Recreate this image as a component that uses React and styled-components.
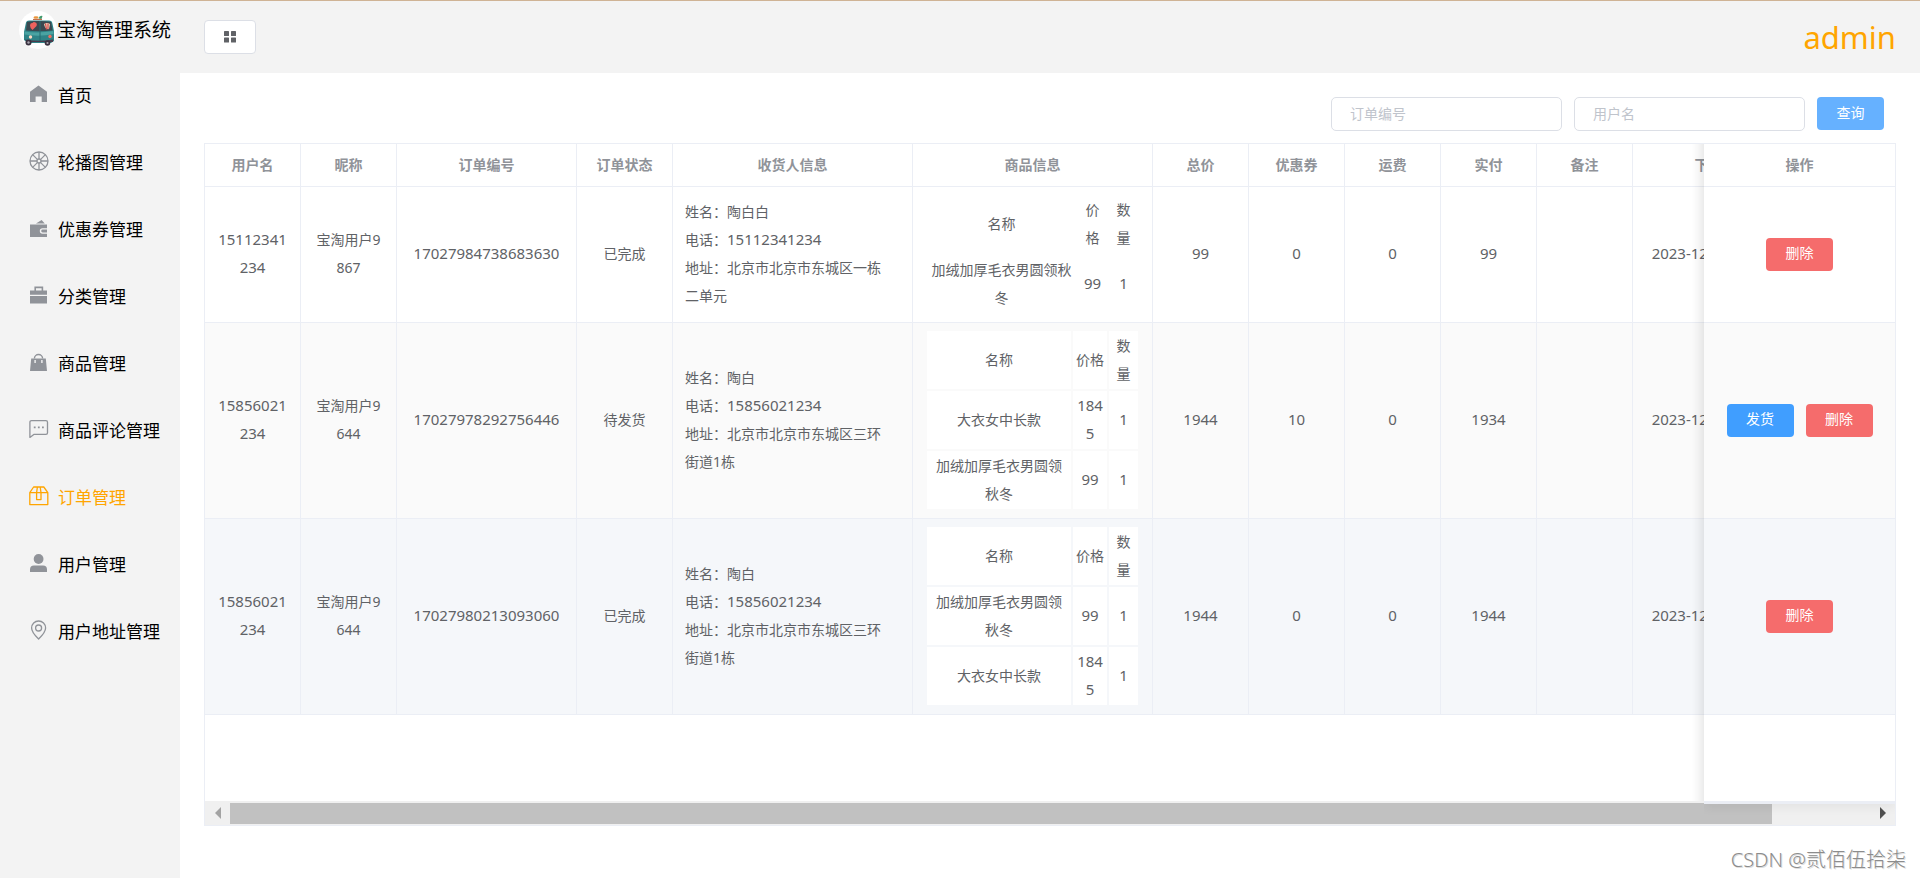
import React, { useRef } from 'react';
import styled, { createGlobalStyle, css } from 'styled-components';

const colors = {
  panel: '#f3f3f3',
  border: '#ebeef5',
  control: '#dcdfe6',
  text: '#606266',
  muted: '#909399',
  placeholder: '#c0c4cc',
  active: '#ffa500',
  primary: '#409eff',
  primaryLight: '#66b1ff',
  danger: '#f56c6c',
};

const GlobalStyle = createGlobalStyle`
  *, *::before, *::after {
    box-sizing: border-box;
  }

  body {
    margin: 0;
    background: #fff;
    font-family: 'Noto Sans', 'Noto Sans CJK SC', sans-serif;
    font-size: 14px;
    color: ${colors.text};
  }

  button, input {
    font-family: inherit;
    font-size: 14px;
  }
`;

const Page = styled.div`
  display: flex;
  min-height: 100vh;
  border-top: 1px solid #cfb395;
`;

const Sidebar = styled.aside`
  flex: 0 0 180px;
  background: ${colors.panel};
`;

const Brand = styled.div`
  display: flex;
  align-items: center;
  height: 60px;
  padding: 0 0 2px 19px;
  font-size: 19px;
  line-height: 24px;
  white-space: nowrap;
  color: #000;
`;

const MenuLink = styled.a`
  display: flex;
  align-items: center;
  gap: 9px;
  height: 67px;
  padding-left: 29px;
  font-size: 17px;
  text-decoration: none;
  white-space: nowrap;
  color: ${({ $active }) => ($active ? colors.active : '#000')};

  svg {
    flex: none;
    margin-bottom: 2px;
    color: ${({ $active }) => ($active ? colors.active : colors.muted)};
  }
`;

const Body = styled.div`
  flex: 1;
  min-width: 0;
`;

const Header = styled.header`
  display: flex;
  align-items: center;
  justify-content: space-between;
  height: 72px;
  padding: 0 24px;
  background: ${colors.panel};
`;

const ToggleButton = styled.button`
  display: flex;
  align-items: center;
  justify-content: center;
  width: 52px;
  height: 34px;
  padding: 0;
  border: 1px solid ${colors.control};
  border-radius: 4px;
  background: #fff;
  color: ${colors.text};
`;

const UserName = styled.span`
  font-size: 31px;
  color: ${colors.active};
`;

const Main = styled.main`
  padding: 24px;
`;

const SearchForm = styled.form`
  display: flex;
  justify-content: flex-end;
  gap: 12px;
  padding-right: 12px;
  margin-bottom: 12px;
`;

const SearchInput = styled.input`
  width: 231px;
  height: 34px;
  padding: 0 18px 2px;
  border: 1px solid ${colors.control};
  border-radius: 5px;
  background: #fff;
  color: ${colors.text};

  &::placeholder {
    color: ${colors.placeholder};
  }
`;

const Button = styled.button`
  min-width: 67px;
  height: 33px;
  padding: 0 18px 2px;
  border: 0;
  border-radius: 4px;
  line-height: 20px;
  color: #fff;
  background: ${({ $color }) => $color};
`;

const TableFrame = styled.div`
  border: 1px solid ${colors.border};
`;

const Scroller = styled.div`
  overflow-x: auto;
  scrollbar-width: none;
`;

const OrderTable = styled.table`
  width: 100%;
  min-width: 1799px;
  table-layout: fixed;
  border-spacing: 0;
  text-align: center;
  word-break: break-all;
`;

const cellBorder = css`
  border-right: 1px solid ${colors.border};
  border-bottom: 1px solid ${colors.border};
`;

// the operation column stays in view while the rest scrolls under it
const fixedCell = css`
  position: sticky;
  right: 0;
  border-right: 0;

  &::before {
    content: '';
    position: absolute;
    top: 0;
    bottom: -1px;
    right: 100%;
    width: 12px;
    background: linear-gradient(to left, rgba(0, 0, 0, 0.08), rgba(0, 0, 0, 0.03) 50%, transparent);
  }
`;

const HeadCell = styled.th`
  height: 43px;
  padding: 0 12px 3px;
  font-weight: 700;
  color: ${colors.muted};
  background: #fff;
  ${cellBorder}
  ${({ $fixed }) => $fixed && fixedCell}
`;

const Row = styled.tr`
  background: ${({ $background }) => $background};
`;

const Cell = styled.td`
  height: 136px;
  padding: 6px ${({ $left }) => ($left ? 20 : 12)}px 7px 12px;
  line-height: 28px;
  text-align: ${({ $left }) => ($left ? 'left' : 'center')};
  background: inherit;
  ${cellBorder}
  ${({ $fixed }) => $fixed && fixedCell}
`;

const BlankCell = styled.td`
  height: 86px;
  padding: 0;
  background: #fff;
  ${({ $fixed }) => $fixed && fixedCell}
`;

const Num = styled.span`
  font-size: 15px;
  line-height: 20px;
`;

const Actions = styled.div`
  display: flex;
  justify-content: center;
  gap: 12px;
`;

const GoodsTable = styled.table`
  width: 100%;
  table-layout: fixed;
  border-spacing: 2px;
  line-height: 28px;

  th,
  td {
    padding: 1px 3px;
    font-weight: 400;
    background: #fff;
  }
`;

const ScrollBar = styled.div`
  position: relative;
  display: flex;
  align-items: center;
  height: 24px;
  background: #f0f0f0;

  /* foot of the fixed column */
  &::after {
    content: '';
    position: absolute;
    top: 0;
    right: 0;
    width: 191px;
    height: 3px;
    background: ${colors.border};
    box-shadow: 0 0 12px rgba(0, 0, 0, 0.2);
    clip-path: inset(0 0 -12px 0);
  }
`;

const ScrollTrack = styled.div`
  flex: 1;
  height: 21px;
`;

const ScrollThumb = styled.div`
  width: 94%;
  height: 100%;
  background: #c1c1c1;
`;

const ArrowButton = styled.button`
  display: flex;
  align-items: center;
  justify-content: center;
  width: 25px;
  height: 24px;
  padding: 0;
  border: 0;
  background: none;
  color: ${({ $dim }) => ($dim ? '#a3a3a3' : '#505050')};
`;

const Watermark = styled.div`
  position: absolute;
  right: 14px;
  bottom: 4px;
  font-size: 20px;
  font-weight: 300;
  line-height: 28px;
  color: #8c8c8c;
  text-shadow: 1px 1px 0 #ddd;
`;

const Icon = ({ children }) => (
  <svg width="20" height="20" viewBox="0 0 20 20" fill="currentColor" aria-hidden="true">
    {children}
  </svg>
);

const LineIcon = ({ children }) => (
  <svg
    width="20"
    height="20"
    viewBox="0 0 20 20"
    fill="none"
    stroke="currentColor"
    strokeWidth="1.3"
    strokeLinejoin="round"
    aria-hidden="true"
  >
    {children}
  </svg>
);

const HomeIcon = () => (
  <Icon>
    <path d="M9.5 1.5 18 7.8V18h-5.3v-5.6H6.6V18H1V7.8z" />
  </Icon>
);

const WheelIcon = () => (
  <LineIcon>
    <circle cx="10" cy="10" r="9" />
    <circle cx="10" cy="10" r="2" />
    <path d="M10 1v7M10 12v7M1 10h7M12 10h7M3.6 3.6l5 5M11.4 11.4l5 5M16.4 3.6l-5 5M8.6 11.4l-5 5" />
  </LineIcon>
);

const WalletIcon = () => (
  <Icon>
    <path d="M7 5.6 12.6 2l3.2 3.6zM1 6.6h17v3.6h-4.4a2.8 2.8 0 0 0 0 5.6H18V19H1z" />
    <path d="M13.6 11.6H18v2.8h-4.4a1.4 1.4 0 0 1 0-2.8z" />
  </Icon>
);

const BriefcaseIcon = () => (
  <Icon>
    <path d="M5.4 1.6h8.8v4H18v4.2H1V5.6h4.4zM7 3.2v2.4h5.6V3.2zM1 11h17v7.6H1z" fillRule="evenodd" />
  </Icon>
);

const BagIcon = () => (
  <Icon>
    <path d="M5.4 6.6a4.1 4.1 0 0 1 8.2 0" fill="none" stroke="currentColor" strokeWidth="1.4" />
    <path d="M2.2 6.6h14.6L18 19H1zM5.4 8v3h1.4V8zM12.2 8v3h1.4V8z" fillRule="evenodd" />
  </Icon>
);

const CommentIcon = () => (
  <LineIcon>
    <path d="M.9 18.4V3.2a1.6 1.6 0 0 1 1.6-1.6h14.4a1.6 1.6 0 0 1 1.6 1.6v10.6a1.6 1.6 0 0 1-1.6 1.6H4.8z" />
    <path d="M4.8 8.4h1.8M8.9 8.4h1.8M13 8.4h1.8" strokeWidth="1.8" />
  </LineIcon>
);

const BoxIcon = () => (
  <LineIcon>
    <path d="M.8 6.6 4.6 1h10.2l4 5.6v12H.8zM.8 6.6h18M7.6 6.6 8.4 1M12 6.6 11.2 1M7.6 6.6v7H12v-7" />
  </LineIcon>
);

const UserIcon = () => (
  <Icon>
    <circle cx="9.6" cy="6" r="4.9" />
    <path d="M1 19v-2.4a4 4 0 0 1 4-4h9a4 4 0 0 1 4 4V19z" />
  </Icon>
);

const PinIcon = () => (
  <LineIcon>
    <path d="M9.6 19C5 14.6 2.6 11.2 2.6 8a7 7 0 0 1 14 0c0 3.2-2.4 6.6-7 11z" />
    <circle cx="9.6" cy="8" r="3" />
  </LineIcon>
);

const GridIcon = () => (
  <svg width="12" height="12" viewBox="0 0 12 12" fill="currentColor" aria-hidden="true">
    <rect width="5" height="5" rx="0.6" />
    <rect x="7" width="5" height="5" rx="0.6" />
    <rect y="6.5" width="5" height="5" rx="0.6" />
    <rect x="7" y="6.5" width="5" height="5" rx="0.6" />
  </svg>
);

const BusLogo = () => (
  <svg width="38" height="38" viewBox="0 0 38 38" aria-hidden="true">
    <circle cx="19" cy="19" r="19" fill="#fff" />
    <ellipse cx="17" cy="6.5" rx="2.5" ry="1.3" fill="#e9963c" />
    <path d="M19.5 7.5q1-3.5 4-2.5l-1 3z" fill="#3f9a6d" />
    <path d="M14 8.5h9" stroke="#c0714f" strokeWidth="1.2" />
    <path d="M7 11.5q.5-1.800 3-2h20q3 0 3.400 3L35 20v10l-3 2H9l-4-3V21z" fill="#2f8387" />
    <path d="M8 11q10-2 24 0l1.500 8.500q-14 1.500-26.500 0z" fill="#3b4850" />
    <path d="M5.500 20.500q14 2 29-.5v3q-14 3-29 .5z" fill="#4aa3a2" />
    <path d="M21 10v21" stroke="#266a70" />
    <path d="M11 14.500q0-3 2.500-2.500 1-1.500 3-.5 2 1 1 3.500L13.500 19Q11 17 11 14.500z" fill="#ee625e" />
    <path d="M25 13q3-2 6 0l-1 5q-4 1-5-5z" fill="#e9d5bd" />
    <path d="M26.500 12.500l1 6M29 12.500v5.500" stroke="#d84a4a" strokeWidth="1.2" />
    <path d="M6 28.500q14 2.500 28 0V31H8z" fill="#4a3b4d" />
    <circle cx="11.5" cy="26" r="1.7" fill="#ffd9c0" />
    <circle cx="31" cy="25.5" r="1.7" fill="#f36f5f" />
    <circle cx="9.5" cy="31.5" r="3" fill="#39313f" />
    <circle cx="28.5" cy="32" r="2.8" fill="#39313f" />
    <circle cx="9.5" cy="31.5" r="1.2" fill="#a9a4ae" />
    <circle cx="28.5" cy="32" r="1.1" fill="#a9a4ae" />
  </svg>
);

const menu = [
  { label: '首页', icon: HomeIcon },
  { label: '轮播图管理', icon: WheelIcon },
  { label: '优惠券管理', icon: WalletIcon },
  { label: '分类管理', icon: BriefcaseIcon },
  { label: '商品管理', icon: BagIcon },
  { label: '商品评论管理', icon: CommentIcon },
  { label: '订单管理', icon: BoxIcon, active: true },
  { label: '用户管理', icon: UserIcon },
  { label: '用户地址管理', icon: PinIcon },
];

const columns = [
  { title: '用户名', width: 96 },
  { title: '昵称', width: 96 },
  { title: '订单编号', width: 180 },
  { title: '订单状态', width: 96 },
  { title: '收货人信息', width: 240 },
  { title: '商品信息', width: 240 },
  { title: '总价', width: 96 },
  { title: '优惠券', width: 96 },
  { title: '运费', width: 96 },
  { title: '实付', width: 96 },
  { title: '备注', width: 96 },
  { title: '下单时间', width: 180 },
];

const orders = [
  {
    user: '15112341234',
    nick: '宝淘用户9867',
    no: '17027984738683630',
    status: '已完成',
    receiver: '陶白白',
    phone: '15112341234',
    address: '北京市北京市东城区一栋二单元',
    goods: [{ name: '加绒加厚毛衣男圆领秋冬', price: 99, count: 1 }],
    priceWidth: 29,
    total: 99,
    coupon: 0,
    freight: 0,
    paid: 99,
    time: '2023-12-17 15:34:33',
    background: '#fff',
  },
  {
    user: '15856021234',
    nick: '宝淘用户9644',
    no: '17027978292756446',
    status: '待发货',
    receiver: '陶白',
    phone: '15856021234',
    address: '北京市北京市东城区三环街道1栋',
    goods: [
      { name: '大衣女中长款', price: 1845, count: 1 },
      { name: '加绒加厚毛衣男圆领秋冬', price: 99, count: 1 },
    ],
    priceWidth: 34,
    total: 1944,
    coupon: 10,
    freight: 0,
    paid: 1934,
    time: '2023-12-17 15:23:49',
    background: '#fafafa',
    canShip: true,
  },
  {
    user: '15856021234',
    nick: '宝淘用户9644',
    no: '17027980213093060',
    status: '已完成',
    receiver: '陶白',
    phone: '15856021234',
    address: '北京市北京市东城区三环街道1栋',
    goods: [
      { name: '加绒加厚毛衣男圆领秋冬', price: 99, count: 1 },
      { name: '大衣女中长款', price: 1845, count: 1 },
    ],
    priceWidth: 34,
    total: 1944,
    coupon: 0,
    freight: 0,
    paid: 1944,
    time: '2023-12-17 15:27:01',
    background: '#f5f7fa',
  },
];

const Goods = ({ items, priceWidth }) => (
  <GoodsTable>
    <colgroup>
      <col />
      <col width={priceWidth} />
      <col width={29} />
    </colgroup>
    <thead>
      <tr>
        <th>名称</th>
        <th>价格</th>
        <th>数量</th>
      </tr>
    </thead>
    <tbody>
      {items.map(item => (
        <tr key={item.name}>
          <td align="center">{item.name}</td>
          <td align="center"><Num>{item.price}</Num></td>
          <td align="center"><Num>{item.count}</Num></td>
        </tr>
      ))}
    </tbody>
  </GoodsTable>
);

const OrderRow = ({ order }) => (
  <Row $background={order.background}>
    <Cell><Num>{order.user}</Num></Cell>
    <Cell>{order.nick}</Cell>
    <Cell><Num>{order.no}</Num></Cell>
    <Cell>{order.status}</Cell>
    <Cell $left>
      <div>{`姓名：${order.receiver}`}</div>
      <div>电话：<Num>{order.phone}</Num></div>
      <div>{`地址：${order.address}`}</div>
    </Cell>
    <Cell>
      <Goods items={order.goods} priceWidth={order.priceWidth} />
    </Cell>
    <Cell><Num>{order.total}</Num></Cell>
    <Cell><Num>{order.coupon}</Num></Cell>
    <Cell><Num>{order.freight}</Num></Cell>
    <Cell><Num>{order.paid}</Num></Cell>
    <Cell />
    <Cell><Num>{order.time}</Num></Cell>
    <Cell $fixed>
      <Actions>
        {order.canShip && <Button type="button" $color={colors.primary}>发货</Button>}
        <Button type="button" $color={colors.danger}>删除</Button>
      </Actions>
    </Cell>
  </Row>
);

const Orders = () => {
  const scroller = useRef(null);
  const scroll = left => scroller.current.scrollBy({ left, behavior: 'smooth' });

  return (
    <TableFrame>
      <Scroller ref={scroller}>
        <OrderTable>
          <colgroup>
            {columns.map(({ title, width }) => <col key={title} width={width} />)}
            <col width={191} />
          </colgroup>
          <thead>
            <tr>
              {columns.map(({ title }) => <HeadCell key={title}>{title}</HeadCell>)}
              <HeadCell $fixed>操作</HeadCell>
            </tr>
          </thead>
          <tbody>
            {orders.map(order => <OrderRow key={order.no} order={order} />)}
            <tr>
              <BlankCell colSpan={columns.length} />
              <BlankCell $fixed />
            </tr>
          </tbody>
        </OrderTable>
      </Scroller>
      <ScrollBar>
        <ArrowButton type="button" $dim aria-label="向左滚动" onClick={() => scroll(-96)}>
          <svg width="6" height="12" viewBox="0 0 6 12" fill="currentColor"><path d="M6 0v12L0 6z" /></svg>
        </ArrowButton>
        <ScrollTrack>
          <ScrollThumb />
        </ScrollTrack>
        <ArrowButton type="button" aria-label="向右滚动" onClick={() => scroll(96)}>
          <svg width="6" height="12" viewBox="0 0 6 12" fill="currentColor"><path d="M0 0v12l6-6z" /></svg>
        </ArrowButton>
      </ScrollBar>
    </TableFrame>
  );
};

const App = () => (
  <>
    <GlobalStyle />
    <Page>
      <Sidebar>
        <Brand>
          <BusLogo />
          宝淘管理系统
        </Brand>
        <nav>
          {menu.map(({ label, icon: ItemIcon, active }) => (
            <MenuLink key={label} href="#" $active={active}>
              <ItemIcon />
              {label}
            </MenuLink>
          ))}
        </nav>
      </Sidebar>
      <Body>
        <Header>
          <ToggleButton type="button" aria-label="菜单">
            <GridIcon />
          </ToggleButton>
          <UserName>admin</UserName>
        </Header>
        <Main>
          <SearchForm onSubmit={e => e.preventDefault()}>
            <SearchInput placeholder="订单编号" aria-label="订单编号" />
            <SearchInput placeholder="用户名" aria-label="用户名" />
            <Button type="submit" $color={colors.primaryLight}>查询</Button>
          </SearchForm>
          <Orders />
        </Main>
      </Body>
    </Page>
    <Watermark>CSDN @贰佰伍拾柒</Watermark>
  </>
);

export default App;
